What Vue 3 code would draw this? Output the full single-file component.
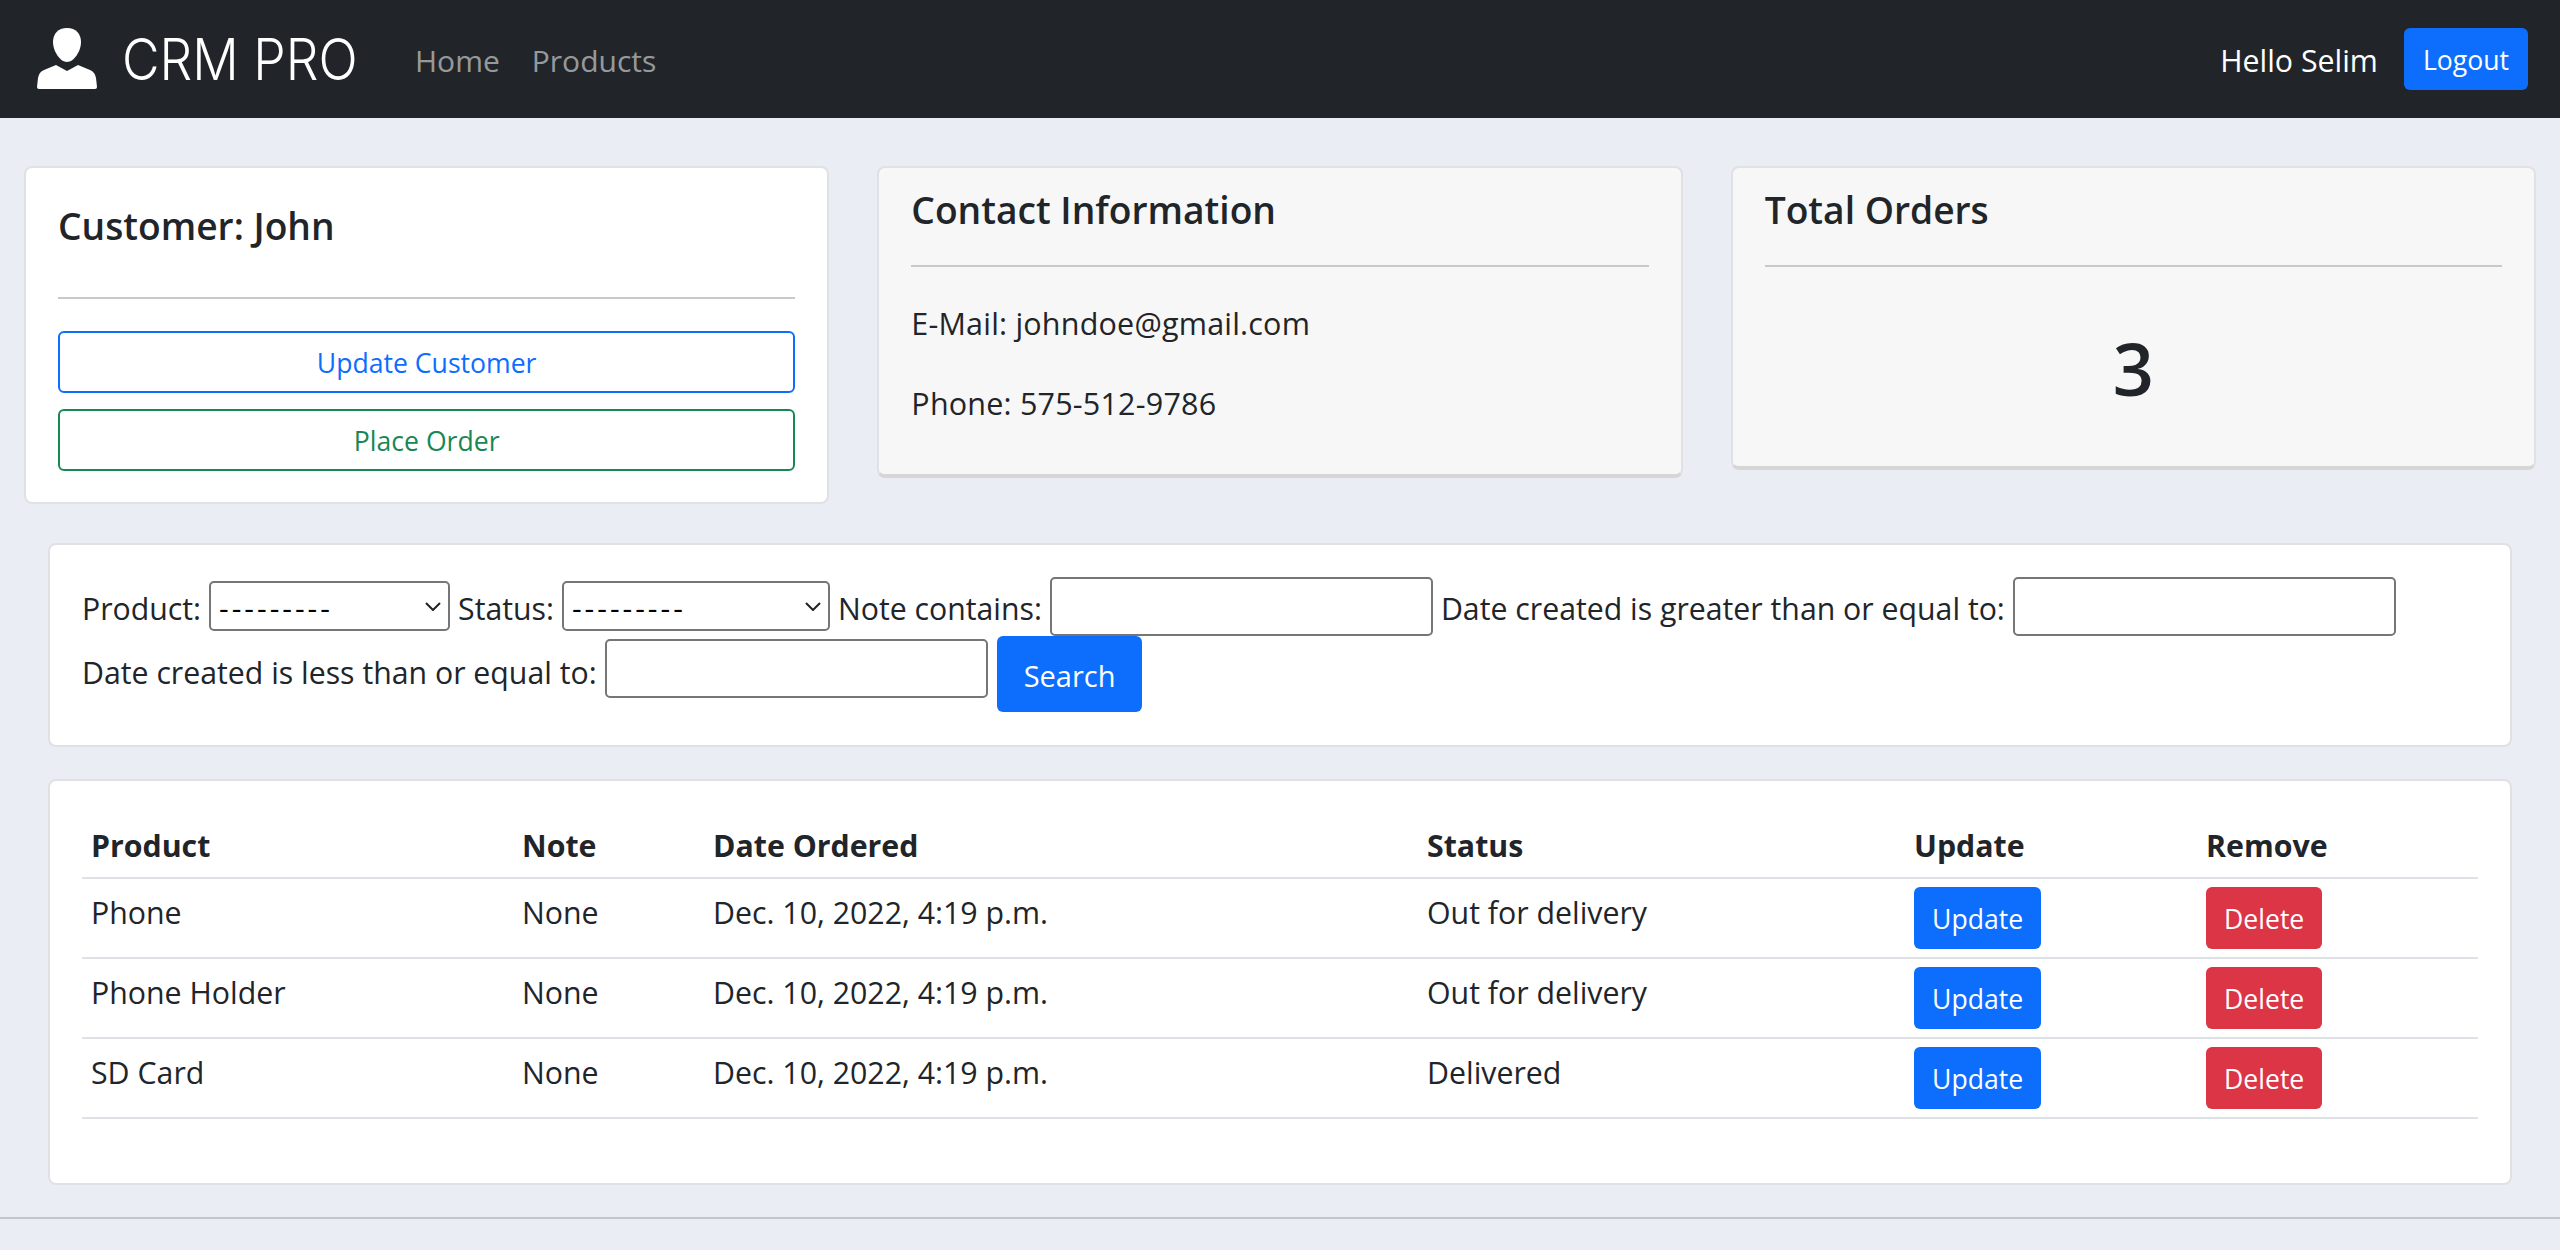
<script setup>
const orders = [
  { product: 'Phone', note: 'None', date: 'Dec. 10, 2022, 4:19 p.m.', status: 'Out for delivery' },
  { product: 'Phone Holder', note: 'None', date: 'Dec. 10, 2022, 4:19 p.m.', status: 'Out for delivery' },
  { product: 'SD Card', note: 'None', date: 'Dec. 10, 2022, 4:19 p.m.', status: 'Delivered' },
]
</script>

<template>
  <nav class="navbar">
    <a class="brand">
      <svg class="brand-icon" viewBox="0 0 60 62" width="60" height="62">
        <path d="M30 0C21 0 16 6 16 14c0 9 7 20 14 20s14-11 14-20C44 6 39 0 30 0Z" fill="#fff" />
        <path d="M19 37l11 6 11-6 12 5q5 2 6 8l1 9q0 2-2 2H2q-2 0-2-2l1-9q1-6 6-8Z" fill="#fff" />
      </svg>
      <span class="brand-text">CRM PRO</span>
    </a>
    <a class="nav-link">Home</a>
    <a class="nav-link">Products</a>
    <span class="hello">Hello Selim</span>
    <button class="btn btn-primary logout">Logout</button>
  </nav>

  <div class="summary">
    <div class="col">
      <div class="card customer">
        <h5>Customer: John</h5>
        <hr />
        <button class="btn btn-outline blue">Update Customer</button>
        <button class="btn btn-outline green">Place Order</button>
      </div>
    </div>
    <div class="col">
      <div class="card info contact">
        <h5>Contact Information</h5>
        <hr />
        <p>E-Mail: johndoe@gmail.com</p>
        <p>Phone: 575-512-9786</p>
      </div>
    </div>
    <div class="col">
      <div class="card info orders-total">
        <h5>Total Orders</h5>
        <hr />
        <h1>3</h1>
      </div>
    </div>
  </div>

  <div class="wide">
    <form class="card filter" @submit.prevent>
      <div class="filter-row first">
        <label>Product:</label>
        <div class="select-wrap">
          <select class="product"><option>---------</option></select>
          <svg class="chevron" viewBox="0 0 16 9" width="16" height="9">
            <path d="M1 1l7 7 7-7" fill="none" stroke="#222" stroke-width="2" />
          </svg>
        </div>
        <label>Status:</label>
        <div class="select-wrap">
          <select class="status"><option>---------</option></select>
          <svg class="chevron" viewBox="0 0 16 9" width="16" height="9">
            <path d="M1 1l7 7 7-7" fill="none" stroke="#222" stroke-width="2" />
          </svg>
        </div>
        <label>Note contains:</label>
        <input type="text" />
        <label>Date created is greater than or equal to:</label>
        <input type="text" />
      </div>
      <div class="filter-row second">
        <label>Date created is less than or equal to:</label>
        <input type="text" />
        <button class="btn btn-primary search">Search</button>
      </div>
    </form>

    <div class="card table-card">
      <table>
        <thead>
          <tr>
            <th class="c-product">Product</th>
            <th class="c-note">Note</th>
            <th class="c-date">Date Ordered</th>
            <th class="c-status">Status</th>
            <th class="c-update">Update</th>
            <th>Remove</th>
          </tr>
        </thead>
        <tbody>
          <tr v-for="order in orders" :key="order.product">
            <td>{{ order.product }}</td>
            <td>{{ order.note }}</td>
            <td>{{ order.date }}</td>
            <td>{{ order.status }}</td>
            <td class="action"><button class="btn btn-primary">Update</button></td>
            <td class="action"><button class="btn btn-danger">Delete</button></td>
          </tr>
        </tbody>
      </table>
    </div>
  </div>

  <div class="footer-line"></div>
</template>

<style>
body {
  background: #eaedf4;
}
</style>

<style scoped>
* {
  box-sizing: border-box;
}

.navbar, .summary, .wide {
  font-family: "Open Sans", "Noto Sans", sans-serif;
  font-size: 30.3px;
  line-height: 39px;
  color: #212529;
}

.navbar {
  height: 118px;
  background: #212529;
  display: flex;
  align-items: center;
  padding-left: 37px;
  padding-right: 32px;
}

.brand {
  display: flex;
  align-items: center;
  width: 378px;
  height: 62px;
}

.brand-icon {
  flex: none;
}

.brand-text {
  margin-left: 25px;
  font-family: "Inter", sans-serif;
  font-weight: 350;
  font-size: 58px;
  line-height: 62px;
  color: #fff;
  white-space: nowrap;
  transform: scaleX(0.89);
  transform-origin: left center;
}

.nav-link {
  font-size: 30px;
  padding-top: 2px;
  color: rgba(255, 255, 255, 0.55);
  margin-right: 32px;
}

.hello {
  margin-left: auto;
  padding-top: 2px;
  color: #fff;
  margin-right: 26px;
}

.btn {
  font-family: inherit;
  font-size: 26.6px;
  line-height: 39px;
  height: 62px;
  padding: 2px 16px 0;
  border-radius: 6px;
  border: 2px solid transparent;
  background: none;
  display: block;
}

.logout {
  padding: 2px 17px 0;
}

.btn-primary {
  background: #0d6efd;
  color: #fff;
}

.btn-danger {
  background: #dc3545;
  color: #fff;
}

.btn-outline {
  width: 100%;
  background: #fff;
}

.blue {
  border-color: #0d6efd;
  color: #0d6efd;
}

.green {
  border-color: #198754;
  color: #198754;
  margin-top: 16px;
}

.summary {
  display: flex;
  padding-top: 48px;
  align-items: flex-start;
}

.col {
  flex: 1;
  padding: 0 24px;
}

.card {
  background: #fff;
  border: 2px solid #e0e1e4;
  border-radius: 8px;
  padding: 31px 32px;
}

h5 {
  margin: 0;
  font-size: 37.2px;
  font-weight: 600;
  line-height: 40px;
}

hr {
  border: 0;
  border-top: 2px solid #c9c9ca;
  margin: 0;
}

.customer {
  height: 338px;
  padding-top: 38px;
}

.customer hr {
  margin-top: 51px;
  margin-bottom: 32px;
}

.info {
  background: #f7f7f7;
  border-bottom: 4px solid #d6d6d6;
  padding-top: 22px;
}

.info hr {
  margin-top: 35px;
}

.contact {
  height: 312px;
}

.contact p {
  margin: 41px 0 0;
  letter-spacing: 0.2px;
  font-size: 30.5px;
}

.contact hr + p {
  margin-top: 37px;
}

.orders-total {
  height: 304px;
}

h1 {
  margin: 62px 0 0;
  font-size: 72px;
  font-weight: 600;
  line-height: 78px;
  text-align: center;
}

.wide {
  padding: 0 48px;
}

.filter {
  margin-top: 39px;
  height: 204px;
  font-size: 30.25px;
}

.filter-row {
  display: flex;
  gap: 8px;
}

.first {
  height: 60px;
  align-items: center;
}

.first label {
  padding-top: 4px;
}

.second {
  height: 76px;
  align-items: flex-start;
}

.second label {
  margin-top: 17px;
}

.second input {
  margin-top: 3px;
}

.second .search {
  margin-left: 1px;
  height: 76px;
  padding: 2px 25px 0;
  font-size: 29px;
}

.select-wrap {
  position: relative;
  display: flex;
}

.chevron {
  position: absolute;
  right: 9px;
  top: 21px;
  pointer-events: none;
}

select {
  appearance: none;
  font-family: inherit;
  font-size: 30px;
  letter-spacing: 3px;
  height: 50px;
  background: #fff;
  color: #000;
  border: 2px solid #767676;
  border-radius: 5px;
  padding: 2px 0 0 8px;
}

.product {
  width: 241px;
}

.status {
  width: 268px;
}

input {
  width: 383px;
  height: 59px;
  border: 2px solid #767676;
  border-radius: 5px;
  background: #fff;
}

.table-card {
  margin-top: 32px;
  height: 406px;
}

table {
  width: 100%;
  border-collapse: collapse;
  table-layout: fixed;
}

th, td {
  text-align: left;
  padding: 14px 9px 12px;
  border-bottom: 2px solid #dee2e6;
  vertical-align: top;
}

td {
  height: 80px;
}

th {
  font-weight: 700;
  height: 65px;
}

.c-product { width: 431px; }
.c-note { width: 191px; }
.c-date { width: 714px; }
.c-status { width: 487px; }
.c-update { width: 292px; }

td.action {
  padding-top: 8px;
  padding-bottom: 8px;
}

.footer-line {
  margin-top: 32px;
  border-top: 2px solid #c3c5cb;
}
</style>
